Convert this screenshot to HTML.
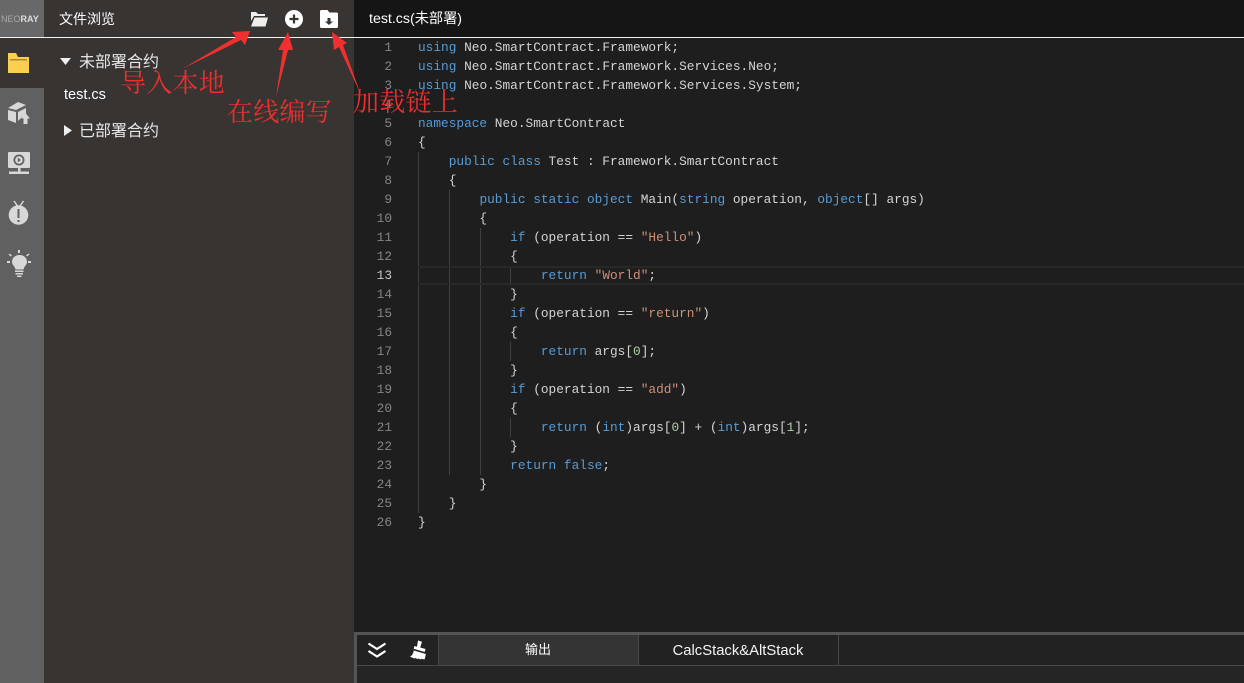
<!DOCTYPE html>
<html><head><meta charset="utf-8">
<style>
html,body{margin:0;padding:0;width:1244px;height:683px;overflow:hidden;background:#1e1e1e;font-family:"Liberation Sans","Noto Sans CJK SC",sans-serif}
div,svg,span{position:absolute}
#code span{position:static}
.ln{left:354px;width:38px;text-align:right;color:#858585;font:12.8px/19px "Liberation Mono",monospace;white-space:pre}
.cl{left:418px;color:#d4d4d4;font:12.8px/19px "Liberation Mono",monospace;white-space:pre}
.k{color:#569cd6}.s{color:#ce9178}.n{color:#b5cea8}
.g{width:1px;background:#404040}
.w{color:#fff;font-size:14px;white-space:nowrap;line-height:20px}
.r{color:#ea2f2f;font-family:"Noto Serif CJK SC",serif;font-size:26px;line-height:30px;white-space:nowrap;letter-spacing:.25px}
</style></head><body>
<div style="left:0;top:0;width:44px;height:683px;background:#606060"></div>
<div style="left:0;top:0;width:44px;height:37px;background:#686868"></div>
<div style="left:0;top:38px;width:44px;height:50px;background:#383431"></div>
<div style="left:44px;top:0;width:310px;height:683px;background:#383431"></div>
<div style="left:354px;top:0;width:890px;height:37px;background:#151515"></div>
<div style="left:0;top:37px;width:1244px;height:1px;background:#f2f2f2"></div>
<div style="left:1px;top:13px;font-size:9px;line-height:12px;color:#a8a8a8;white-space:nowrap">NEO<b style="color:#ddd">RAY</b></div>

<svg style="left:0;top:0" width="44" height="290" viewBox="0 0 44 290">
<path d="M8 53h8l2 4h11v16H8z" fill="#fdcf50"/><rect x="10" y="59" width="17" height="1.500" fill="#a98a33"/>
<g fill="#d8d8d8">
<path d="M8 108l10-6 8 3-10 5z"/>
<path d="M8 110l8 2v11l-8-3z"/>
<path d="M18 112l8-4v6l-4 3-4 4z"/>
<path d="M25.500 113l4.500 5.500h-2.500v5.500h-4v-5.500H21z"/>
</g>
<path d="M9 152h20a1 1 0 0 1 1 1v14a1 1 0 0 1-1 1H9a1 1 0 0 1-1-1v-14a1 1 0 0 1 1-1z" fill="#d8d8d8"/>
<circle cx="19" cy="160" r="5.500" fill="#606060"/><circle cx="19" cy="160" r="3.800" fill="#d8d8d8"/><path d="M17.800 157.800l3.200 2.200-3.200 2.200z" fill="#606060"/>
<rect x="18" y="168" width="2.500" height="4" fill="#d8d8d8"/><rect x="9" y="171.500" width="20" height="2.500" fill="#d8d8d8"/>
<circle cx="18.500" cy="215" r="9.800" fill="#d8d8d8"/>
<path d="M14 201l3.500 5M23.500 201l-3.500 5" stroke="#d8d8d8" stroke-width="1.500"/>
<rect x="17.500" y="209" width="2" height="9" fill="#606060"/><rect x="17.500" y="220" width="2" height="2" fill="#606060"/>
<g fill="#d8d8d8">
<path d="M19.500 255c4.400 0 7.500 3 7.500 6.800 0 2.700-2 4-3 6.200l-.5 1.500h-8l-.5-1.500c-1-2.200-3-3.500-3-6.200 0-3.800 3.100-6.800 7.500-6.800z"/>
<rect x="15" y="270.500" width="8.500" height="1.500"/><rect x="15.500" y="273" width="7.500" height="1.500"/><rect x="17" y="275.500" width="4.500" height="1.500"/>
<rect x="18" y="250" width="2" height="3"/><rect x="7" y="261" width="3" height="2"/><rect x="28" y="261" width="3" height="2"/>
<path d="M9.500 253.500l2.500 2-1 1-2.500-2zM28.500 253.500l-2.500 2 1 1 2.500-2z"/>
</g>
</svg>

<div class="w" style="left:59px;top:9px">文件浏览</div>
<svg style="left:250px;top:11px" width="18" height="16" viewBox="0 0 18 16"><path d="M1 1h5l2 2h7v2H4L1 10z" fill="#eee"/><path d="M4.500 6.500H18l-2.500 9H1z" fill="#eee"/></svg>
<svg style="left:285px;top:10px" width="18" height="18" viewBox="0 0 18 18"><circle cx="9" cy="9" r="9" fill="#fff"/><path d="M9 4.500v9M4.500 9h9" stroke="#383431" stroke-width="2.200"/></svg>
<svg style="left:320px;top:10px" width="18" height="18" viewBox="0 0 18 18"><path d="M1.500 0h6l2 2.500h7a1.500 1.500 0 0 1 1.500 1.500v12.500a1.500 1.500 0 0 1-1.500 1.500h-15A1.500 1.500 0 0 1 0 16.500v-15A1.500 1.500 0 0 1 1.500 0z" fill="#fff"/><path d="M7.500 8h3v3.500h2.500l-4 3.500-4-3.500h2.500z" fill="#383431"/></svg>

<svg style="left:60px;top:58px" width="12" height="8"><path d="M0 0h11L5.500 7z" fill="#eee"/></svg>
<div class="w" style="left:79px;top:53px;font-size:16px;color:#e6e6e6">未部署合约</div>
<div class="w" style="left:64px;top:85px;font-size:14.500px">test.cs</div>
<svg style="left:64px;top:125px" width="9" height="12"><path d="M0 0l8 5.500L0 11z" fill="#eee"/></svg>
<div class="w" style="left:79px;top:122px;font-size:16px;color:#e6e6e6">已部署合约</div>

<div class="w" style="left:369px;top:9px;font-size:14.200px">test.cs(未部署)</div>

<div class="g" style="left:418px;top:152px;height:361px"></div>
<div class="g" style="left:449px;top:190px;height:285px"></div>
<div class="g" style="left:480px;top:228px;height:247px"></div>
<div class="g" style="left:510px;top:266px;height:19px"></div>
<div class="g" style="left:510px;top:342px;height:19px"></div>
<div class="g" style="left:510px;top:418px;height:19px"></div>
<div style="left:418px;top:266px;width:826px;height:15px;border-top:2px solid #282828;border-bottom:2px solid #282828"></div>

<div id="code">
<div class="ln" style="top:38px">1
2
3
4
5
6
7
8
9
10
11
12
<span style="color:#c6c6c6">13</span>
14
15
16
17
18
19
20
21
22
23
24
25
26</div>
<div class="cl" style="top:38px"><span class="k">using</span> Neo.SmartContract.Framework;
<span class="k">using</span> Neo.SmartContract.Framework.Services.Neo;
<span class="k">using</span> Neo.SmartContract.Framework.Services.System;

<span class="k">namespace</span> Neo.SmartContract
{
    <span class="k">public class</span> Test : Framework.SmartContract
    {
        <span class="k">public static object</span> Main(<span class="k">string</span> operation, <span class="k">object</span>[] args)
        {
            <span class="k">if</span> (operation == <span class="s">"Hello"</span>)
            {
                <span class="k">return</span> <span class="s">"World"</span>;
            }
            <span class="k">if</span> (operation == <span class="s">"return"</span>)
            {
                <span class="k">return</span> args[<span class="n">0</span>];
            }
            <span class="k">if</span> (operation == <span class="s">"add"</span>)
            {
                <span class="k">return</span> (<span class="k">int</span>)args[<span class="n">0</span>] + (<span class="k">int</span>)args[<span class="n">1</span>];
            }
            <span class="k">return false</span>;
        }
    }
}</div>
</div>

<div style="left:354px;top:632px;width:890px;height:51px;background:#252526"></div>
<div style="left:357px;top:635px;width:887px;height:30px;background:#222"></div>
<div style="left:354px;top:632px;width:890px;height:3px;background:#555"></div>
<div style="left:354px;top:632px;width:3px;height:51px;background:#555"></div>
<div style="left:357px;top:665px;width:887px;height:1px;background:#47474a"></div>
<div style="left:438px;top:635px;width:200px;height:30px;background:#343434"></div>
<div style="left:438px;top:635px;width:1px;height:30px;background:#47474a"></div>
<div style="left:638px;top:635px;width:1px;height:30px;background:#47474a"></div>
<div style="left:838px;top:635px;width:1px;height:30px;background:#47474a"></div>
<svg style="left:367px;top:642px" width="20" height="17" viewBox="0 0 20 17"><path d="M1.500 1.500l8.500 5.500 8.500-5.500M1.500 9l8.500 5.500 8.500-5.500" fill="none" stroke="#fff" stroke-width="2.200"/></svg>
<svg style="left:409px;top:640px" width="19" height="20" viewBox="0 0 19 20"><path d="M9 .5l4 1.200-1.800 5.800 5.300 1.500-.8 3-11-3.200.8-2.800 2.500.7z" fill="#fff"/><path d="M4.800 10.500l12 3.500c-.3 2-.7 3.700-1.300 5.500l-3-.7-1 .7-2-1-1 .6-2-1.100-1 .5-4.500-1.800c2-1 3.300-3 3.800-6.700z" fill="#fff"/></svg>
<div class="w" style="left:438px;top:640px;width:200px;text-align:center;font-size:13px">输出</div>
<div class="w" style="left:638px;top:641px;width:200px;text-align:center;font-size:14.800px;color:#f4f4f4">CalcStack&amp;AltStack</div>

<svg style="left:0;top:0" width="1244" height="140" viewBox="0 0 1244 140">
<g fill="#f03030">
<path d="M182 69L236 37 232 32 250 31 245 45 241 40z"/>
<path d="M276 97L283 50 278 50 288 32 293 50 288 50z"/>
<path d="M361 95L339 47 334 50 332 32 347 43 343 45z"/>
</g>
</svg>
<div class="r" style="left:120px;top:67px">导入本地</div>
<div class="r" style="left:227px;top:96px">在线编写</div>
<div class="r" style="left:353px;top:86px">加载链上</div>
</body></html>
